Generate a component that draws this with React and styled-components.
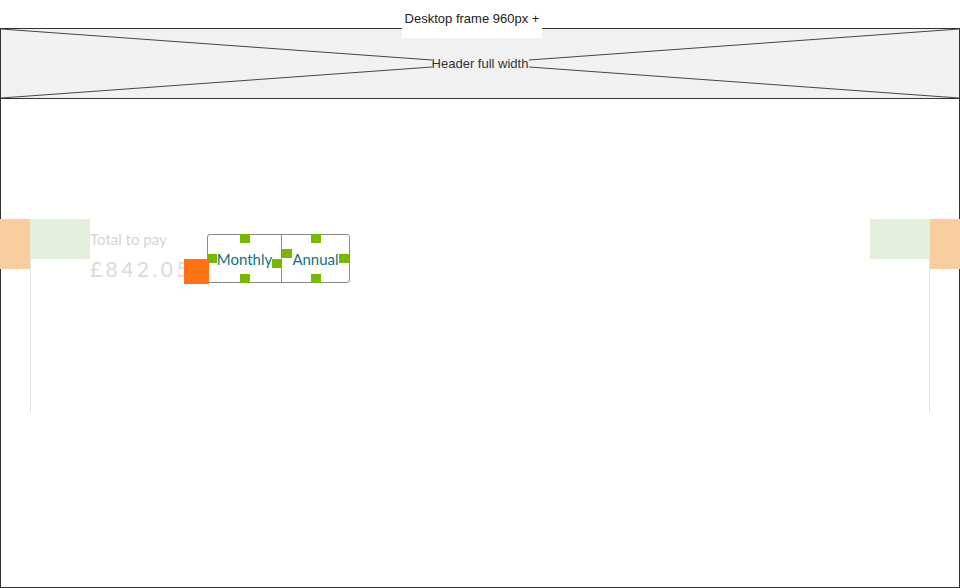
import React from "react";
import styled, { createGlobalStyle } from "styled-components";

const GlobalStyle = createGlobalStyle`
  html, body {
    margin: 0;
    padding: 0;
    background: #fff;
  }
  body {
    font-family: "Liberation Sans", Arial, sans-serif;
  }
`;

const Page = styled.div`
  width: 960px;
  height: 588px;
  display: flex;
  flex-direction: column;
  align-items: center;
  overflow: hidden;
`;

const FrameLabel = styled.div`
  position: relative;
  z-index: 2;
  width: 140px;
  height: 30px;
  margin: 8px 0 -10px -16px;
  background: #fff;
  font-size: 13px;
  line-height: 16px;
  padding-top: 3px;
  box-sizing: border-box;
  text-align: center;
  color: #222;
`;

const Frame = styled.div`
  align-self: stretch;
  height: 560px;
  box-sizing: border-box;
  border: 1px solid #333;
  display: flex;
  flex-direction: column;
`;

const Header = styled.div`
  position: relative;
  height: 70px;
  box-sizing: border-box;
  background: #f1f1f1;
  border-bottom: 1px solid #333;
  display: flex;
  align-items: center;
  justify-content: center;
`;

const HeaderCross = styled.svg`
  position: absolute;
  inset: 0;
  width: 100%;
  height: 100%;
`;

const HeaderLabel = styled.span`
  position: relative;
  font-size: 13px;
  line-height: 16px;
  color: #333;
  padding: 0 2px;
`;

const Body = styled.div`
  padding-top: 120px;
`;

const Row = styled.div`
  display: flex;
  align-items: flex-start;
  margin: 0 -1px;
`;

const Bleed = styled.div`
  position: relative;
  z-index: 1;
  width: 30px;
  height: 50px;
  background: #f8cea0;
  flex-shrink: 0;
`;

const Gutter = styled.div`
  width: 60px;
  flex-shrink: 0;
  display: flex;
  flex-direction: column;
  align-items: ${({ $side }) => ($side === "right" ? "flex-end" : "flex-start")};
`;

const Pad = styled.div`
  width: 60px;
  height: 40px;
  background: #e2efdc;
`;

const Rail = styled.div`
  width: 1px;
  height: 153px;
  background: #e2e2e2;
`;

const Main = styled.div`
  flex: 1;
  display: flex;
  align-items: flex-start;
  padding-top: 10px;
  font-family: Lato, "Open Sans", sans-serif;
`;

const Total = styled.div`
  position: relative;
  width: 117px;
  flex-shrink: 0;
  display: flex;
  flex-direction: column;
  gap: 8px;
`;

const TotalLabel = styled.div`
  font-size: 15px;
  line-height: 20px;
  color: #d4d4d4;
`;

const Price = styled.div`
  font-size: 21px;
  line-height: 24px;
  letter-spacing: 3.4px;
  color: #dadada;
  white-space: nowrap;
`;

const Marker = styled.div`
  position: absolute;
  left: 94px;
  top: 30px;
  width: 25px;
  height: 25px;
  background: #ff7216;
  z-index: 2;
`;

const Toggle = styled.div`
  position: relative;
  margin-top: 5px;
  display: flex;
  height: 49px;
  box-sizing: border-box;
  border: 1px solid #8a8a8a;
  border-radius: 3px;
  background: #fff;
`;

const Option = styled.div`
  display: flex;
  align-items: center;
  justify-content: center;
  width: ${({ $w }) => $w}px;
  font-size: 15px;
  color: #12707f;
  & + & {
    border-left: 1px solid #8a8a8a;
  }
`;

const Handle = styled.span`
  position: absolute;
  left: ${({ $x }) => $x}px;
  top: ${({ $y }) => $y}px;
  width: 10px;
  height: 9px;
  background: #77b900;
`;

const handles = [
  [32, -1], [-1, 19], [64, 24], [32, 39],
  [103, -1], [74, 14], [131, 19], [103, 39],
];

export default function App() {
  return (
    <>
      <GlobalStyle />
      <Page>
        <FrameLabel>Desktop frame 960px +</FrameLabel>
        <Frame>
          <Header>
            <HeaderCross viewBox="0 0 958 69" preserveAspectRatio="none">
              <g stroke="#444" strokeWidth="1" fill="none">
                <line x1="0" y1="0" x2="431" y2="31" />
                <line x1="0" y1="69" x2="431" y2="38" />
                <line x1="958" y1="0" x2="528" y2="31" />
                <line x1="958" y1="69" x2="528" y2="38" />
              </g>
            </HeaderCross>
            <HeaderLabel>Header full width</HeaderLabel>
          </Header>
          <Body>
            <Row>
              <Bleed />
              <Gutter>
                <Pad />
                <Rail />
              </Gutter>
              <Main>
                <Total>
                  <TotalLabel>Total to pay</TotalLabel>
                  <Price>£842.05</Price>
                  <Marker />
                </Total>
                <Toggle>
                  <Option $w={73}>Monthly</Option>
                  <Option $w={67}>Annual</Option>
                  {handles.map(([x, y], i) => (
                    <Handle key={i} $x={x} $y={y} />
                  ))}
                </Toggle>
              </Main>
              <Gutter $side="right">
                <Pad />
                <Rail />
              </Gutter>
              <Bleed />
            </Row>
          </Body>
        </Frame>
      </Page>
    </>
  );
}
